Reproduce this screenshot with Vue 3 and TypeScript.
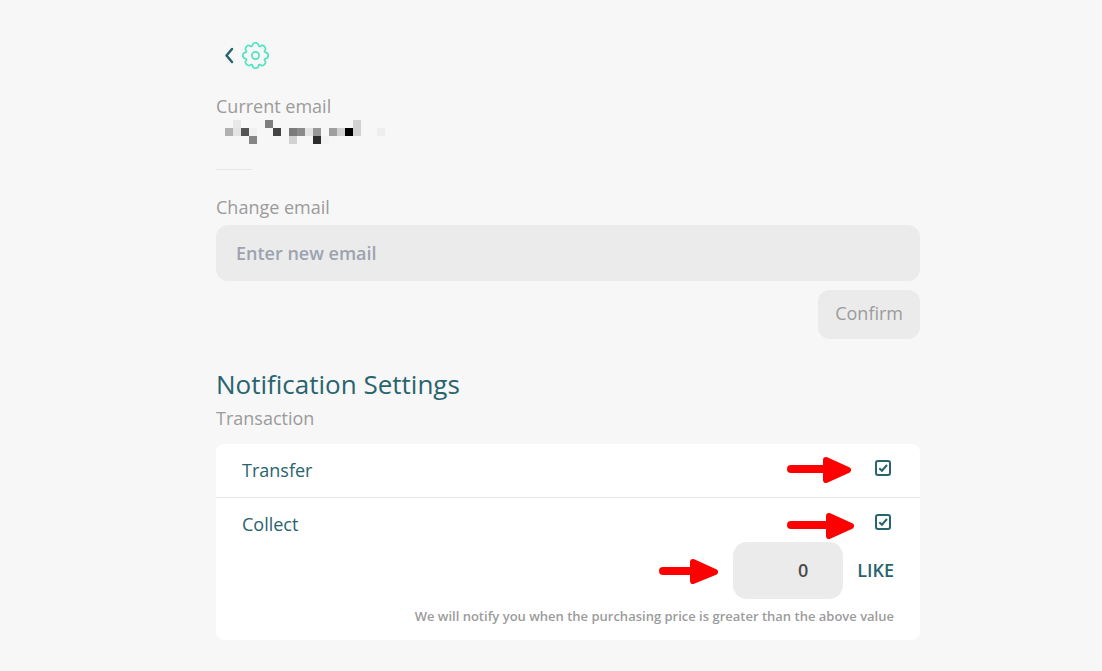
<script setup lang="ts">
import { ref } from 'vue'

const email = ref('')
const transfer = ref(true)
const collect = ref(true)
const amount = ref('0')

// Column, row and shade of every block that masks the address
const mask: [number, number, string][] = [
  [1, 0, '#e8e8e8'], [5, 0, '#7e7e7e'], [16, 0, '#d1d1d1'],
  [0, 1, '#b1b1b1'], [1, 1, '#e4e4e4'], [2, 1, '#555555'], [3, 1, '#f0f0f0'],
  [6, 1, '#444444'], [8, 1, '#7b7b7b'], [9, 1, '#8b8b8b'], [10, 1, '#e3e3e3'],
  [11, 1, '#989898'], [13, 1, '#9f9f9f'], [14, 1, '#d1d1d1'], [15, 1, '#000000'],
  [16, 1, '#d1d1d1'], [19, 1, '#eeeeee'],
  [3, 2, '#858585'], [8, 2, '#d2d2d2'], [11, 2, '#2c2c2c'], [12, 2, '#f3f3f3'],
]

// Outline of the gear: eight rounded lobes joined by small hollows
function gearPath(): string {
  const at = (deg: number) => {
    const a = (deg * Math.PI) / 180
    return `${(13.5 + 10.6 * Math.cos(a)).toFixed(2)} ${(13.5 + 10.6 * Math.sin(a)).toFixed(2)}`
  }
  let d = `M${at(-17)}`
  for (let i = 0; i < 8; i++) {
    d += `A3.15 3.15 0 0 1 ${at(i * 45 + 17)}A1.1 1.1 0 0 0 ${at(i * 45 + 28)}`
  }
  return d + 'Z'
}
const gear = gearPath()
</script>

<template>
  <main class="page">
    <header class="top">
      <button class="back" type="button" aria-label="Back">
        <svg width="12" height="18" viewBox="0 0 12 18"><path d="M9 2 3.500 8.500 9 15" /></svg>
      </button>
      <svg class="gear" width="28" height="28" viewBox="0 0 28 28" aria-hidden="true">
        <path :d="gear" />
        <circle cx="13.500" cy="13.500" r="3.600" />
      </svg>
    </header>

    <section class="current">
      <p class="label">Current email</p>
      <svg class="mask" width="160" height="24" viewBox="0 0 160 24" shape-rendering="crispEdges" aria-hidden="true">
        <rect v-for="([c, r, fill], i) in mask" :key="i" :x="c * 8" :y="r * 8" width="8" height="8" :fill="fill" />
      </svg>
      <hr class="rule" />
    </section>

    <form class="change" @submit.prevent>
      <label class="label" for="email">Change email</label>
      <input id="email" v-model="email" class="field" type="email" placeholder="Enter new email" />
      <button class="confirm" type="submit">Confirm</button>
    </form>

    <section>
      <h1 class="title">Notification Settings</h1>
      <p class="label">Transaction</p>
      <div class="card">
        <div class="row first">
          <label for="transfer">Transfer</label>
          <span class="tick">
            <input id="transfer" v-model="transfer" type="checkbox" />
            <svg v-if="transfer" width="16" height="16" viewBox="0 0 16 16"><path d="M4.300 8.200 6.900 10.700 12 5" /></svg>
            <svg class="arrow" width="65" height="26" viewBox="0 0 65 26" aria-hidden="true">
              <path class="shaft" d="M4 12H42" /><path class="head" d="M39 3 61 13 39 23Z" />
            </svg>
          </span>
        </div>
        <div class="row">
          <label for="collect">Collect</label>
          <span class="tick">
            <input id="collect" v-model="collect" type="checkbox" />
            <svg v-if="collect" width="16" height="16" viewBox="0 0 16 16"><path d="M4.300 8.200 6.900 10.700 12 5" /></svg>
            <svg class="arrow second" width="68" height="26" viewBox="0 0 68 26" aria-hidden="true">
              <path class="shaft" d="M4 12H45" /><path class="head" d="M42 3 64 13 42 23Z" />
            </svg>
          </span>
        </div>
        <div class="price">
          <svg class="arrow" width="60" height="26" viewBox="0 0 60 26" aria-hidden="true">
            <path class="shaft" d="M4 13H37" /><path class="head" d="M34 4 56 14 34 23Z" />
          </svg>
          <input id="amount" v-model="amount" class="amount" type="text" inputmode="numeric" />
          <label for="amount">LIKE</label>
        </div>
        <p class="note">We will notify you when the purchasing price is greater than the above value</p>
      </div>
    </section>
  </main>
</template>

<style>
html,
body {
  background: #f7f7f7;
}
</style>

<style scoped>
.page {
  padding: 40px 182px 31px 216px;
  font-family: "Open Sans", "Noto Sans", sans-serif;
  font-size: 18px;
  line-height: 24px;
  color: #28646e;
}
.page * {
  box-sizing: border-box;
}
p,
h1 {
  margin: 0;
}
button,
input {
  margin: 0;
  border: 0;
  font: inherit;
}
svg {
  display: block;
}
.top {
  display: flex;
  align-items: center;
  gap: 5px;
  height: 32px;
  padding-left: 5px;
}
.back {
  width: 16px;
  padding: 0 2px;
  background: none;
}
.back path {
  fill: none;
  stroke: #28646e;
  stroke-width: 2.5;
  stroke-linecap: round;
  stroke-linejoin: round;
}
.gear {
  fill: none;
  stroke: #50e3c2;
  stroke-width: 1.7;
  stroke-linejoin: round;
}
.current {
  padding-top: 22px;
}
.label {
  display: block;
  color: #9b9b9b;
}
.mask {
  margin: 2px 0 0 9px;
}
.rule {
  width: 36px;
  height: 1px;
  margin: 25px 0;
  border: 0;
  background: #e6e6e6;
}
.change {
  display: flex;
  flex-direction: column;
}
.field {
  height: 56px;
  margin-top: 6px;
  padding: 0 20px;
  border-radius: 12px;
  background: #ebebeb;
  color: #4a4a4a;
  font-weight: 600;
}
.field::placeholder {
  color: #9ca3af;
  opacity: 1;
}
.confirm {
  align-self: flex-end;
  height: 49px;
  margin-top: 9px;
  padding: 0 17px 4px;
  border-radius: 12px;
  background: #ebebeb;
  color: #9b9b9b;
}
.title {
  margin-top: 27px;
  font-size: 26px;
  font-weight: 400;
  line-height: 36px;
  margin-bottom: 4px;
}
.card {
  margin-top: 14px;
  padding-bottom: 14px;
  border-radius: 8px;
  background: #fff;
}
.row {
  display: flex;
  justify-content: space-between;
  height: 44px;
  padding: 14px 29px 0 26px;
}
.first {
  height: 54px;
  border-bottom: 1px solid #e6e6e6;
}
.tick {
  position: relative;
  width: 16px;
  height: 16px;
  margin-top: 2px;
}
.tick input {
  display: block;
  appearance: none;
  width: 16px;
  height: 16px;
  border: 2px solid #28646e;
  border-radius: 3px;
}
.tick svg {
  position: absolute;
  top: 0;
  left: 0;
  fill: none;
  stroke: #28646e;
  stroke-width: 2;
  pointer-events: none;
}
.tick .arrow {
  top: -3px;
  left: -88px;
}
.tick .second {
  top: -1px;
}
.arrow path {
  stroke: #f00;
  stroke-linejoin: round;
  stroke-linecap: round;
}
.arrow .shaft {
  stroke-width: 8;
}
.arrow .head {
  fill: #f00;
  stroke-width: 6;
}
.price {
  display: flex;
  align-items: center;
  justify-content: flex-end;
  gap: 14px;
  padding-right: 26px;
  font-weight: 600;
}
.price label {
  padding-bottom: 2px;
}
.amount {
  width: 110px;
  height: 57px;
  padding: 0 35px 2px 16px;
  border-radius: 14px;
  background: #ebebeb;
  color: #4a4a4a;
  text-align: right;
}
.note {
  margin-top: 7px;
  padding: 0 26px;
  color: #9b9b9b;
  font-size: 13px;
  font-weight: 600;
  line-height: 20px;
  text-align: right;
}
</style>
